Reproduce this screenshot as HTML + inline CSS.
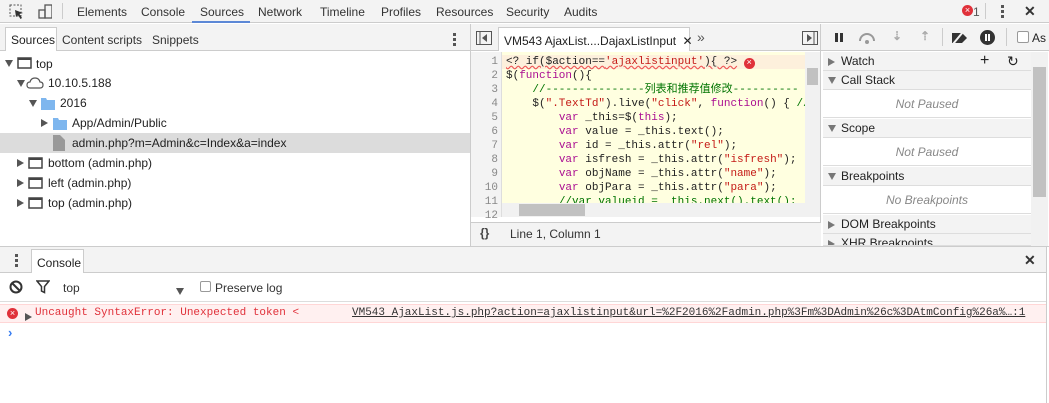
<!DOCTYPE html>
<html><head><meta charset="utf-8"><style>
*{box-sizing:border-box;margin:0;padding:0}
body{width:1049px;height:403px;overflow:hidden;background:#fff;font-family:"Liberation Sans","Noto Sans CJK SC",sans-serif;font-size:12px;color:#222;position:relative}
.a{position:absolute}
.mono{font-family:"Liberation Mono","Noto Sans CJK SC",monospace;font-size:11px}
.tab{position:absolute;top:5px;color:#333}
.tri{display:inline-block;width:0;height:0;border-left:4px solid transparent;border-right:4px solid transparent;border-top:7px solid #555}
.trir{display:inline-block;width:0;height:0;border-top:4px solid transparent;border-bottom:4px solid transparent;border-left:7px solid #555}
.row{position:absolute;left:0;height:20px;line-height:20px;white-space:nowrap}
.ph{position:absolute;left:823px;width:208px;height:19px;background:#f3f3f3;border-bottom:1px solid #ddd;line-height:18px;padding-left:18px;color:#222}
.ph i{position:absolute;left:5px;top:6px}
.np{position:absolute;left:823px;width:208px;height:28px;line-height:28px;text-align:center;font-style:italic;color:#888;border-bottom:1px solid #ddd}
.code div{height:14px;line-height:14px;white-space:pre}
.kw{color:#aa0d91}.str{color:#c41a16}.cm{color:#007400}
.ln div{height:14px;line-height:14px;text-align:right;color:#888}
.x{position:absolute;font-size:14px;color:#333;font-weight:bold}
</style></head><body>
<div class="a" style="left:0;top:0;width:1049px;height:23px;background:#f3f3f3;border-bottom:1px solid #ccc"></div>
<svg class="a" style="left:8px;top:3px" width="44" height="17"><rect x="2" y="2" width="11" height="11" fill="none" stroke="#555" stroke-dasharray="2 1.5"/><path d="M7 7 L15 10 L11.5 11 L14 15 L12.5 16 L10 12 L8 14 Z" fill="#333"/><rect x="37" y="2" width="7" height="13" fill="none" stroke="#555" stroke-width="1.3"/><rect x="31" y="7" width="6" height="8" fill="none" stroke="#555" stroke-width="1.3"/></svg>
<div class="a" style="left:62px;top:3px;width:1px;height:16px;background:#ccc"></div>
<div class="tab" style="left:77px">Elements</div>
<div class="tab" style="left:141px">Console</div>
<div class="tab" style="left:200px">Sources</div>
<div class="a" style="left:192px;top:21px;width:58px;height:2px;background:#5c88d6"></div>
<div class="tab" style="left:258px">Network</div>
<div class="tab" style="left:320px">Timeline</div>
<div class="tab" style="left:381px">Profiles</div>
<div class="tab" style="left:436px">Resources</div>
<div class="tab" style="left:506px">Security</div>
<div class="tab" style="left:564px">Audits</div>
<div class="a" style="left:962px;top:5px;width:11px;height:11px;border-radius:50%;background:#e0313a;color:#fff;font-size:9px;line-height:11px;text-align:center">×</div>
<div class="tab" style="left:973px;color:#555">1</div>
<div class="a" style="left:985px;top:3px;width:1px;height:16px;background:#ccc"></div>
<div class="a" style="left:1001px;top:5px;width:3px;height:3px;background:#555;box-shadow:0 5px #555,0 10px #555"></div>
<div class="x" style="left:1024px;top:3px">✕</div>

<div class="a" style="left:0;top:24px;width:472px;height:27px;background:#f3f3f3;border-bottom:1px solid #ccc"></div>
<div class="a" style="left:5px;top:27px;width:52px;height:24px;background:#fff;border:1px solid #ccc;border-bottom:none;padding:5px 0 0 5px">Sources</div>
<div class="a" style="left:62px;top:33px;color:#333">Content scripts</div>
<div class="a" style="left:152px;top:33px;color:#333">Snippets</div>
<div class="a" style="left:453px;top:33px;width:3px;height:3px;background:#555;box-shadow:0 5px #555,0 10px #555"></div>
<div class="a" style="left:470px;top:24px;width:1px;height:222px;background:#ccc"></div>
<div class="row" style="top:53px;left:5px"><i class="tri"></i></div>
<svg class="a" style="left:17px;top:57px" width="16" height="13"><rect x="1" y="1" width="13" height="10" fill="none" stroke="#444" stroke-width="1.5"/><rect x="1" y="1" width="13" height="2" fill="#444"/></svg>
<div class="row" style="top:54px;left:36px">top</div>
<div class="row" style="top:73px;left:17px"><i class="tri"></i></div>
<svg class="a" style="left:26px;top:77px" width="18" height="12"><path d="M4 11 Q1 11 1 8 Q1 5 4 5 Q5 1 9 1 Q13 1 14 5 Q17 5 17 8 Q17 11 14 11 Z" fill="none" stroke="#555" stroke-width="1.2"/></svg>
<div class="row" style="top:73px;left:48px">10.10.5.188</div>
<div class="row" style="top:93px;left:29px"><i class="tri"></i></div>
<svg class="a" style="left:41px;top:97px" width="14" height="13"><path d="M0 1h5l1 2h8v10H0z" fill="#7eb6ee"/></svg>
<div class="row" style="top:93px;left:60px">2016</div>
<div class="row" style="top:113px;left:41px"><i class="trir"></i></div>
<svg class="a" style="left:53px;top:117px" width="14" height="13"><path d="M0 1h5l1 2h8v10H0z" fill="#7eb6ee"/></svg>
<div class="row" style="top:113px;left:72px">App/Admin/Public</div>
<div class="a" style="left:0;top:133px;width:470px;height:20px;background:#dcdcdc"></div>
<svg class="a" style="left:53px;top:135px" width="12" height="16"><path d="M0 0h7l5 5v11H0z" fill="#999"/></svg>
<div class="row" style="top:133px;left:72px">admin.php?m=Admin&amp;c=Index&amp;a=index</div>
<div class="row" style="top:153px;left:17px"><i class="trir"></i></div>
<svg class="a" style="left:28px;top:157px" width="16" height="13"><rect x="1" y="1" width="13" height="10" fill="none" stroke="#444" stroke-width="1.5"/><rect x="1" y="1" width="13" height="2" fill="#444"/></svg>
<div class="row" style="top:153px;left:48px">bottom (admin.php)</div>
<div class="row" style="top:173px;left:17px"><i class="trir"></i></div>
<svg class="a" style="left:28px;top:177px" width="16" height="13"><rect x="1" y="1" width="13" height="10" fill="none" stroke="#444" stroke-width="1.5"/><rect x="1" y="1" width="13" height="2" fill="#444"/></svg>
<div class="row" style="top:173px;left:48px">left (admin.php)</div>
<div class="row" style="top:193px;left:17px"><i class="trir"></i></div>
<svg class="a" style="left:28px;top:197px" width="16" height="13"><rect x="1" y="1" width="13" height="10" fill="none" stroke="#444" stroke-width="1.5"/><rect x="1" y="1" width="13" height="2" fill="#444"/></svg>
<div class="row" style="top:193px;left:48px">top (admin.php)</div>

<div class="a" style="left:471px;top:24px;width:351px;height:27px;background:#f3f3f3;border-bottom:1px solid #ccc"></div>
<svg class="a" style="left:476px;top:31px" width="16" height="14"><rect x="0.5" y="0.5" width="15" height="13" fill="none" stroke="#555"/><line x1="4" y1="1" x2="4" y2="13" stroke="#555"/><path d="M11 3v8l-5-4z" fill="#555"/></svg>
<div class="a" style="left:498px;top:27px;width:192px;height:24px;background:#fff;border:1px solid #ccc;border-bottom:none;padding:6px 0 0 5px;white-space:nowrap">VM543 AjaxList....DajaxListInput <span style="margin-left:3px">✕</span></div>
<div class="a" style="left:697px;top:29px;font-size:14px;color:#555">»</div>
<svg class="a" style="left:802px;top:31px" width="16" height="14"><rect x="0.5" y="0.5" width="15" height="13" fill="none" stroke="#555"/><line x1="12" y1="1" x2="12" y2="13" stroke="#555"/><path d="M5 3v8l5-4z" fill="#555"/></svg>
<div class="a" style="left:820px;top:24px;width:1px;height:222px;background:#ccc"></div>
<div class="a" style="left:471px;top:52px;width:31px;height:165px;background:#f3f3f3;border-right:1px solid #ddd"></div>
<div class="a" style="left:502px;top:52px;width:303px;height:151px;background:#ffffe0"></div>
<div class="a" style="left:502px;top:55px;width:303px;height:14px;background:#fdf0dc"></div>
<div class="a ln mono" style="left:471px;top:55px;width:27px">
<div>1</div><div>2</div><div>3</div><div>4</div><div>5</div><div>6</div><div>7</div><div>8</div><div>9</div><div>10</div><div>11</div><div>12</div></div>
<div class="a code mono" style="left:506px;top:55px;width:299px;height:148px;overflow:hidden">
<div><span style="text-decoration:underline wavy #e55;color:#222">&lt;? if($action==<span class="str">'ajaxlistinput'</span>){ ?&gt;</span> <span style="display:inline-block;width:11px;height:11px;border-radius:50%;background:#e0313a;color:#fff;font-size:9px;line-height:11px;text-align:center;vertical-align:-1px">×</span></div>
<div>$(<span class="kw">function</span>(){</div>
<div>    <span class="cm">//---------------列表和推荐值修改----------</span></div>
<div>    $(<span class="str">".TextTd"</span>).live(<span class="str">"click"</span>, <span class="kw">function</span>() { <span class="cm">//</span></div>
<div>        <span class="kw">var</span> _this=$(<span class="kw">this</span>);</div>
<div>        <span class="kw">var</span> value = _this.text();</div>
<div>        <span class="kw">var</span> id = _this.attr(<span class="str">"rel"</span>);</div>
<div>        <span class="kw">var</span> isfresh = _this.attr(<span class="str">"isfresh"</span>);</div>
<div>        <span class="kw">var</span> objName = _this.attr(<span class="str">"name"</span>);</div>
<div>        <span class="kw">var</span> objPara = _this.attr(<span class="str">"para"</span>);</div>
<div>        <span class="cm">//var valueid = _this.next().text();</span></div>
</div>
<div class="a" style="left:805px;top:52px;width:15px;height:151px;background:#f1f1f1"></div>
<div class="a" style="left:807px;top:68px;width:11px;height:17px;background:#c1c1c1"></div>
<div class="a" style="left:502px;top:203px;width:318px;height:14px;background:#f1f1f1"></div>
<div class="a" style="left:519px;top:204px;width:66px;height:12px;background:#c1c1c1"></div>
<div class="a" style="left:471px;top:222px;width:350px;height:24px;background:#f3f3f3;border-top:1px solid #ccc"></div>
<div class="a" style="left:480px;top:226px;font-weight:bold;color:#444">{}</div>
<div class="a" style="left:510px;top:227px;color:#333">Line 1, Column 1</div>

<div class="a" style="left:821px;top:24px;width:228px;height:27px;background:#f3f3f3;border-bottom:1px solid #ccc"></div>
<div class="a" style="left:835px;top:33px;width:3px;height:9px;background:#333;box-shadow:5px 0 #333"></div>
<svg class="a" style="left:857px;top:31px" width="20" height="14"><path d="M3 10 A7 7 0 0 1 17 10" fill="none" stroke="#999" stroke-width="2"/><circle cx="10" cy="11" r="2" fill="#999"/></svg>
<div class="a" style="left:892px;top:29px;color:#aaa;font-weight:bold">⇣</div>
<div class="a" style="left:920px;top:29px;color:#aaa;font-weight:bold">⇡</div>
<div class="a" style="left:942px;top:28px;width:1px;height:18px;background:#ccc"></div>
<svg class="a" style="left:950px;top:31px" width="20" height="14"><path d="M2 2h10l5 5-5 5H2z" fill="#333"/><line x1="3" y1="13" x2="13" y2="1" stroke="#f3f3f3" stroke-width="2"/></svg>
<div class="a" style="left:980px;top:30px;width:15px;height:15px;border-radius:50%;background:#333"></div>
<div class="a" style="left:985px;top:34px;width:2px;height:7px;background:#fff;box-shadow:3px 0 #fff"></div>
<div class="a" style="left:1006px;top:28px;width:1px;height:18px;background:#ccc"></div>
<div class="a" style="left:1017px;top:31px;width:12px;height:12px;border:1px solid #999;border-radius:2px;background:#fff"></div>
<div class="a" style="left:1032px;top:31px">As</div>
<div class="ph" style="top:52px"><i class="trir" style="border-left-color:#777"></i>Watch<span style="position:absolute;left:157px;font-size:16px">+</span><span style="position:absolute;left:184px;font-size:14px">↻</span></div>
<div class="ph" style="top:71px"><i class="tri" style="border-top-color:#777"></i>Call Stack</div>
<div class="np" style="top:90px">Not Paused</div>
<div class="ph" style="top:119px"><i class="tri" style="border-top-color:#777"></i>Scope</div>
<div class="np" style="top:138px">Not Paused</div>
<div class="ph" style="top:167px"><i class="tri" style="border-top-color:#777"></i>Breakpoints</div>
<div class="np" style="top:186px">No Breakpoints</div>
<div class="ph" style="top:215px"><i class="trir" style="border-left-color:#777"></i>DOM Breakpoints</div>
<div class="ph" style="top:234px;height:12px;overflow:hidden"><i class="trir" style="border-left-color:#777"></i>XHR Breakpoints</div>
<div class="a" style="left:1031px;top:52px;width:17px;height:194px;background:#f1f1f1"></div>
<div class="a" style="left:1033px;top:67px;width:13px;height:130px;background:#c1c1c1"></div>

<div class="a" style="left:0;top:246px;width:1049px;height:27px;background:#f3f3f3;border-top:1px solid #ccc;border-bottom:1px solid #ccc"></div>
<div class="a" style="left:15px;top:254px;width:3px;height:3px;background:#555;box-shadow:0 5px #555,0 10px #555"></div>
<div class="a" style="left:31px;top:249px;width:53px;height:24px;background:#fff;border:1px solid #ccc;border-bottom:none;padding:6px 0 0 5px">Console</div>
<div class="x" style="left:1024px;top:252px">✕</div>
<svg class="a" style="left:9px;top:280px" width="14" height="14"><circle cx="7" cy="7" r="5.5" fill="none" stroke="#333" stroke-width="2"/><line x1="3" y1="3" x2="11" y2="11" stroke="#333" stroke-width="2"/></svg>
<svg class="a" style="left:36px;top:280px" width="14" height="14"><path d="M1 1h12l-4.5 5.5v6l-3-1.5v-4.5z" fill="none" stroke="#333" stroke-width="1.5"/></svg>
<div class="a" style="left:63px;top:281px;color:#333">top</div>
<div class="a" style="left:176px;top:284px"><i class="tri" style="border-top-color:#555"></i></div>
<div class="a" style="left:200px;top:281px;width:11px;height:11px;border:1px solid #999;border-radius:2px"></div>
<div class="a" style="left:215px;top:281px;color:#333">Preserve log</div>
<div class="a" style="left:0;top:301px;width:1049px;height:1px;background:#ddd"></div>
<div class="a" style="left:0;top:304px;width:1049px;height:19px;background:#fff0f0;border-top:1px solid #ffd6d6;border-bottom:1px solid #ffd6d6"></div>
<div class="a" style="left:7px;top:308px;width:11px;height:11px;border-radius:50%;background:#e0313a;color:#fff;font-size:9px;line-height:11px;text-align:center">×</div>
<div class="a" style="left:25px;top:310px"><i class="trir" style="border-left-color:#555"></i></div>
<div class="a mono" style="left:35px;top:307px;color:#e0313a">Uncaught SyntaxError: Unexpected token &lt;</div>
<div class="a mono" style="left:352px;top:307px;color:#333;text-decoration:underline;white-space:nowrap">VM543 AjaxList.js.php?action=ajaxlistinput&amp;url=%2F2016%2Fadmin.php%3Fm%3DAdmin%26c%3DAtmConfig%26a%…:1</div>
<div class="a" style="left:8px;top:325px;color:#367cf1;font-weight:bold;font-size:13px">›</div>
<div class="a" style="left:1046px;top:247px;width:3px;height:156px;background:#fff;border-left:1px solid #ccc"></div>
</body></html>
